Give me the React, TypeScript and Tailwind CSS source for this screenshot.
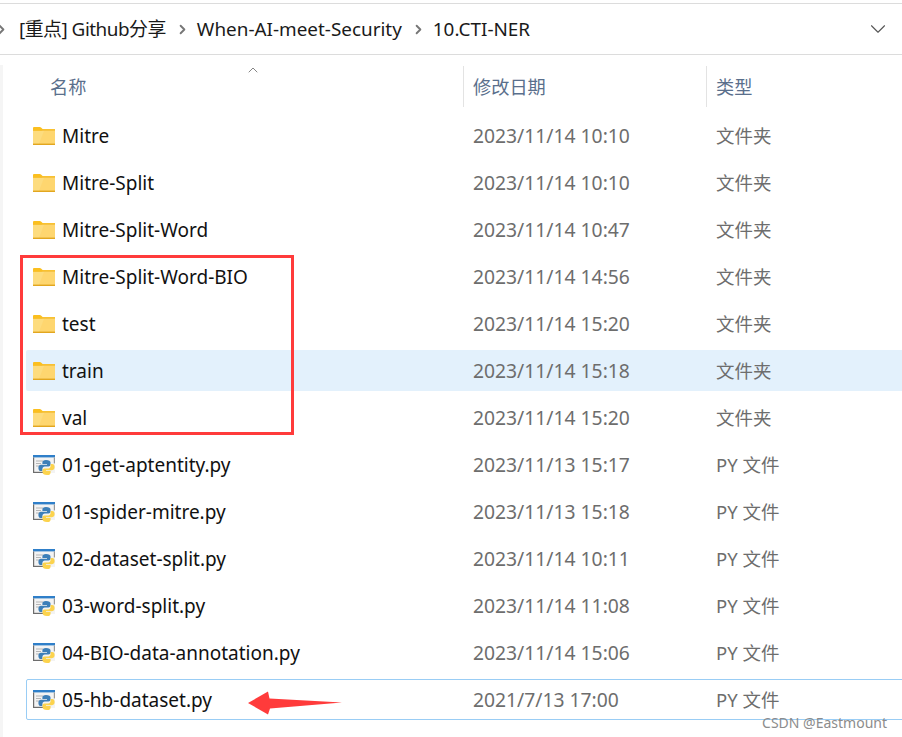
import { ChevronRight, ChevronDown, ChevronUp } from "lucide-react";

const FONT = "font-['Noto_Sans','Noto_Sans_CJK_SC',sans-serif]";

type Row = { name: string; date: string; kind: "folder" | "py"; state?: "hover" | "focus" };

const ROWS: Row[] = [
  { name: "Mitre", date: "2023/11/14 10:10", kind: "folder" },
  { name: "Mitre-Split", date: "2023/11/14 10:10", kind: "folder" },
  { name: "Mitre-Split-Word", date: "2023/11/14 10:47", kind: "folder" },
  { name: "Mitre-Split-Word-BIO", date: "2023/11/14 14:56", kind: "folder" },
  { name: "test", date: "2023/11/14 15:20", kind: "folder" },
  { name: "train", date: "2023/11/14 15:18", kind: "folder", state: "hover" },
  { name: "val", date: "2023/11/14 15:20", kind: "folder" },
  { name: "01-get-aptentity.py", date: "2023/11/13 15:17", kind: "py" },
  { name: "01-spider-mitre.py", date: "2023/11/13 15:18", kind: "py" },
  { name: "02-dataset-split.py", date: "2023/11/14 10:11", kind: "py" },
  { name: "03-word-split.py", date: "2023/11/14 11:08", kind: "py" },
  { name: "04-BIO-data-annotation.py", date: "2023/11/14 15:06", kind: "py" },
  { name: "05-hb-dataset.py", date: "2021/7/13 17:00", kind: "py", state: "focus" },
];

function FolderIcon() {
  return (
    <svg width="22" height="18" viewBox="0 0 22 18" className="shrink-0">
      <path d="M0 1.200C0 .5.5 0 1.200 0h5.600c.5 0 .9.2 1.200.5L9.600 2H22v3H0z" fill="#fbbf1f" />
      <path d="M0 3.500h8.500L10 2.400h12V18H0z" fill="#f6c445" />
      <rect x="0" y="4" width="22" height="13" fill="#fddc7e" />
      <path d="M11 4h11v13H6z" fill="#fed369" opacity="0.7" />
      <rect x="0" y="16.600" width="22" height="1.400" fill="#e2a61f" />
    </svg>
  );
}

function PyIcon() {
  return (
    <svg width="22" height="20" viewBox="0 0 22 20" className="shrink-0">
      <rect x="0" y="0" width="22" height="18" fill="#f3f3f3" />
      <rect x="0" y="0" width="22" height="2.400" fill="#2f7fc9" />
      <rect x="0" y="2.400" width="1.200" height="15.600" fill="#6d6d6d" />
      <rect x="20.800" y="2.400" width="1.200" height="6" fill="#9a9a9a" />
      <rect x="0" y="16.800" width="10" height="1.200" fill="#6d6d6d" />
      <path d="M3 6h7M3 8.500h5M3 11h4" stroke="#b5b5b5" strokeWidth="1" />
      <path d="M13 5c-2.600 0-3.600 1-3.600 2.600V9H14v.8H8c-1.800 0-2.600 1.300-2.600 3.100 0 1.900.9 3.100 2.500 3.100h1.500v-2c0-1.400 1-2.400 2.500-2.400h3.600c1.100 0 2-.9 2-2V7.600C17.500 6 16 5 13 5z" fill="#3d7fb8" />
      <path d="M14 20c2.600 0 3.600-1 3.600-2.600V16H13v-.8h6c1.800 0 2.600-1.300 2.600-3.100 0-1.900-.9-3.100-2.500-3.100h-1.500v2c0 1.400-1 2.400-2.500 2.400h-3.600c-1.100 0-2 .9-2 2v1.600C9.500 19 11 20 14 20z" fill="#fcd34d" />
    </svg>
  );
}

export default function App() {
  return (
    <div className={`relative h-[737px] w-[902px] overflow-hidden bg-white ${FONT}`}>
      {/* breadcrumb */}
      <div className="mt-[3px] flex h-[52px] items-center border-y border-[#dcdcdc] text-[18.900px] text-[#1a1a1a]">
        <ChevronRight size={15} strokeWidth={3} className="ml-[-6px] mr-[10px] text-[#777]" />
        <span className="tracking-[-0.5px]">[重点] Github分享</span>
        <ChevronRight size={15} strokeWidth={3} className="ml-[9px] mr-[7px] text-[#777]" />
        <span>When-AI-meet-Security</span>
        <ChevronRight size={15} strokeWidth={3} className="ml-[9px] mr-[7px] text-[#777]" />
        <span>10.CTI-NER</span>
        <ChevronDown size={26} strokeWidth={1} className="ml-auto mr-[11px] text-[#555]" />
      </div>

      <div className="flex">
        <div className="mt-[10px] h-[672px] w-[3px] bg-[#f5f5f5]" />
        <div className="min-w-0 flex-1">
          {/* column header */}
          <div className="relative mt-[11px] flex h-[41px] items-center text-[18.200px] text-[#5a6f8c]">
            <span className="ml-[47px] w-[413px] pt-[2px]">名称</span>
            <div className="h-[41px] w-px bg-[#e3e3e3]" />
            <span className="ml-[9px] w-[233px] pt-[2px]">修改日期</span>
            <div className="h-[41px] w-px bg-[#e3e3e3]" />
            <span className="ml-[9px] pt-[2px]">类型</span>
            <ChevronUp size={16} strokeWidth={1.200} className="absolute left-[242px] top-[-4px] text-[#666]" />
          </div>

          {/* file rows, the last one runs off the right edge */}
          <div className="mr-[-4px] mt-[8px] flex flex-col gap-[6px] pl-[23px]">
            {ROWS.map((r) => (
              <div
                key={r.name}
                className={`flex h-[41px] items-center border text-[19px] ${
                  r.state === "focus" ? "rounded-l-[2px] border-[#99cdf5]" : "border-transparent"
                } ${r.state === "hover" ? "rounded-l-[2px] bg-[#e3f1fc]" : ""}`}
              >
                <div className="ml-[6px] flex w-[29px] shrink-0">{r.kind === "folder" ? <FolderIcon /> : <PyIcon />}</div>
                <span className="w-[411px] whitespace-nowrap pt-[2px] text-[#111]">{r.name}</span>
                <span className="w-[243px] whitespace-nowrap pt-px text-[19.300px] text-[#6d6d6d]">{r.date}</span>
                <span className="whitespace-nowrap text-[18.500px] text-[#6d6d6d]">{r.kind === "folder" ? "文件夹" : "PY 文件"}</span>
              </div>
            ))}
          </div>
        </div>
      </div>

      {/* annotations */}
      <div className="absolute left-[20px] top-[255px] h-[180px] w-[274px] border-[3px] border-[#ff3b3b]" />
      <svg className="absolute left-[246px] top-[690px]" width="98" height="26" viewBox="0 0 98 26">
        <path d="M2 13 22 1.500l1.500 7L96 12.500 24 18.500 22 24.500z" fill="#ff3b3b" />
      </svg>
      <span className="absolute right-[15px] top-[712px] text-[14px] text-[#8c8c8c]">CSDN @Eastmount</span>
    </div>
  );
}
